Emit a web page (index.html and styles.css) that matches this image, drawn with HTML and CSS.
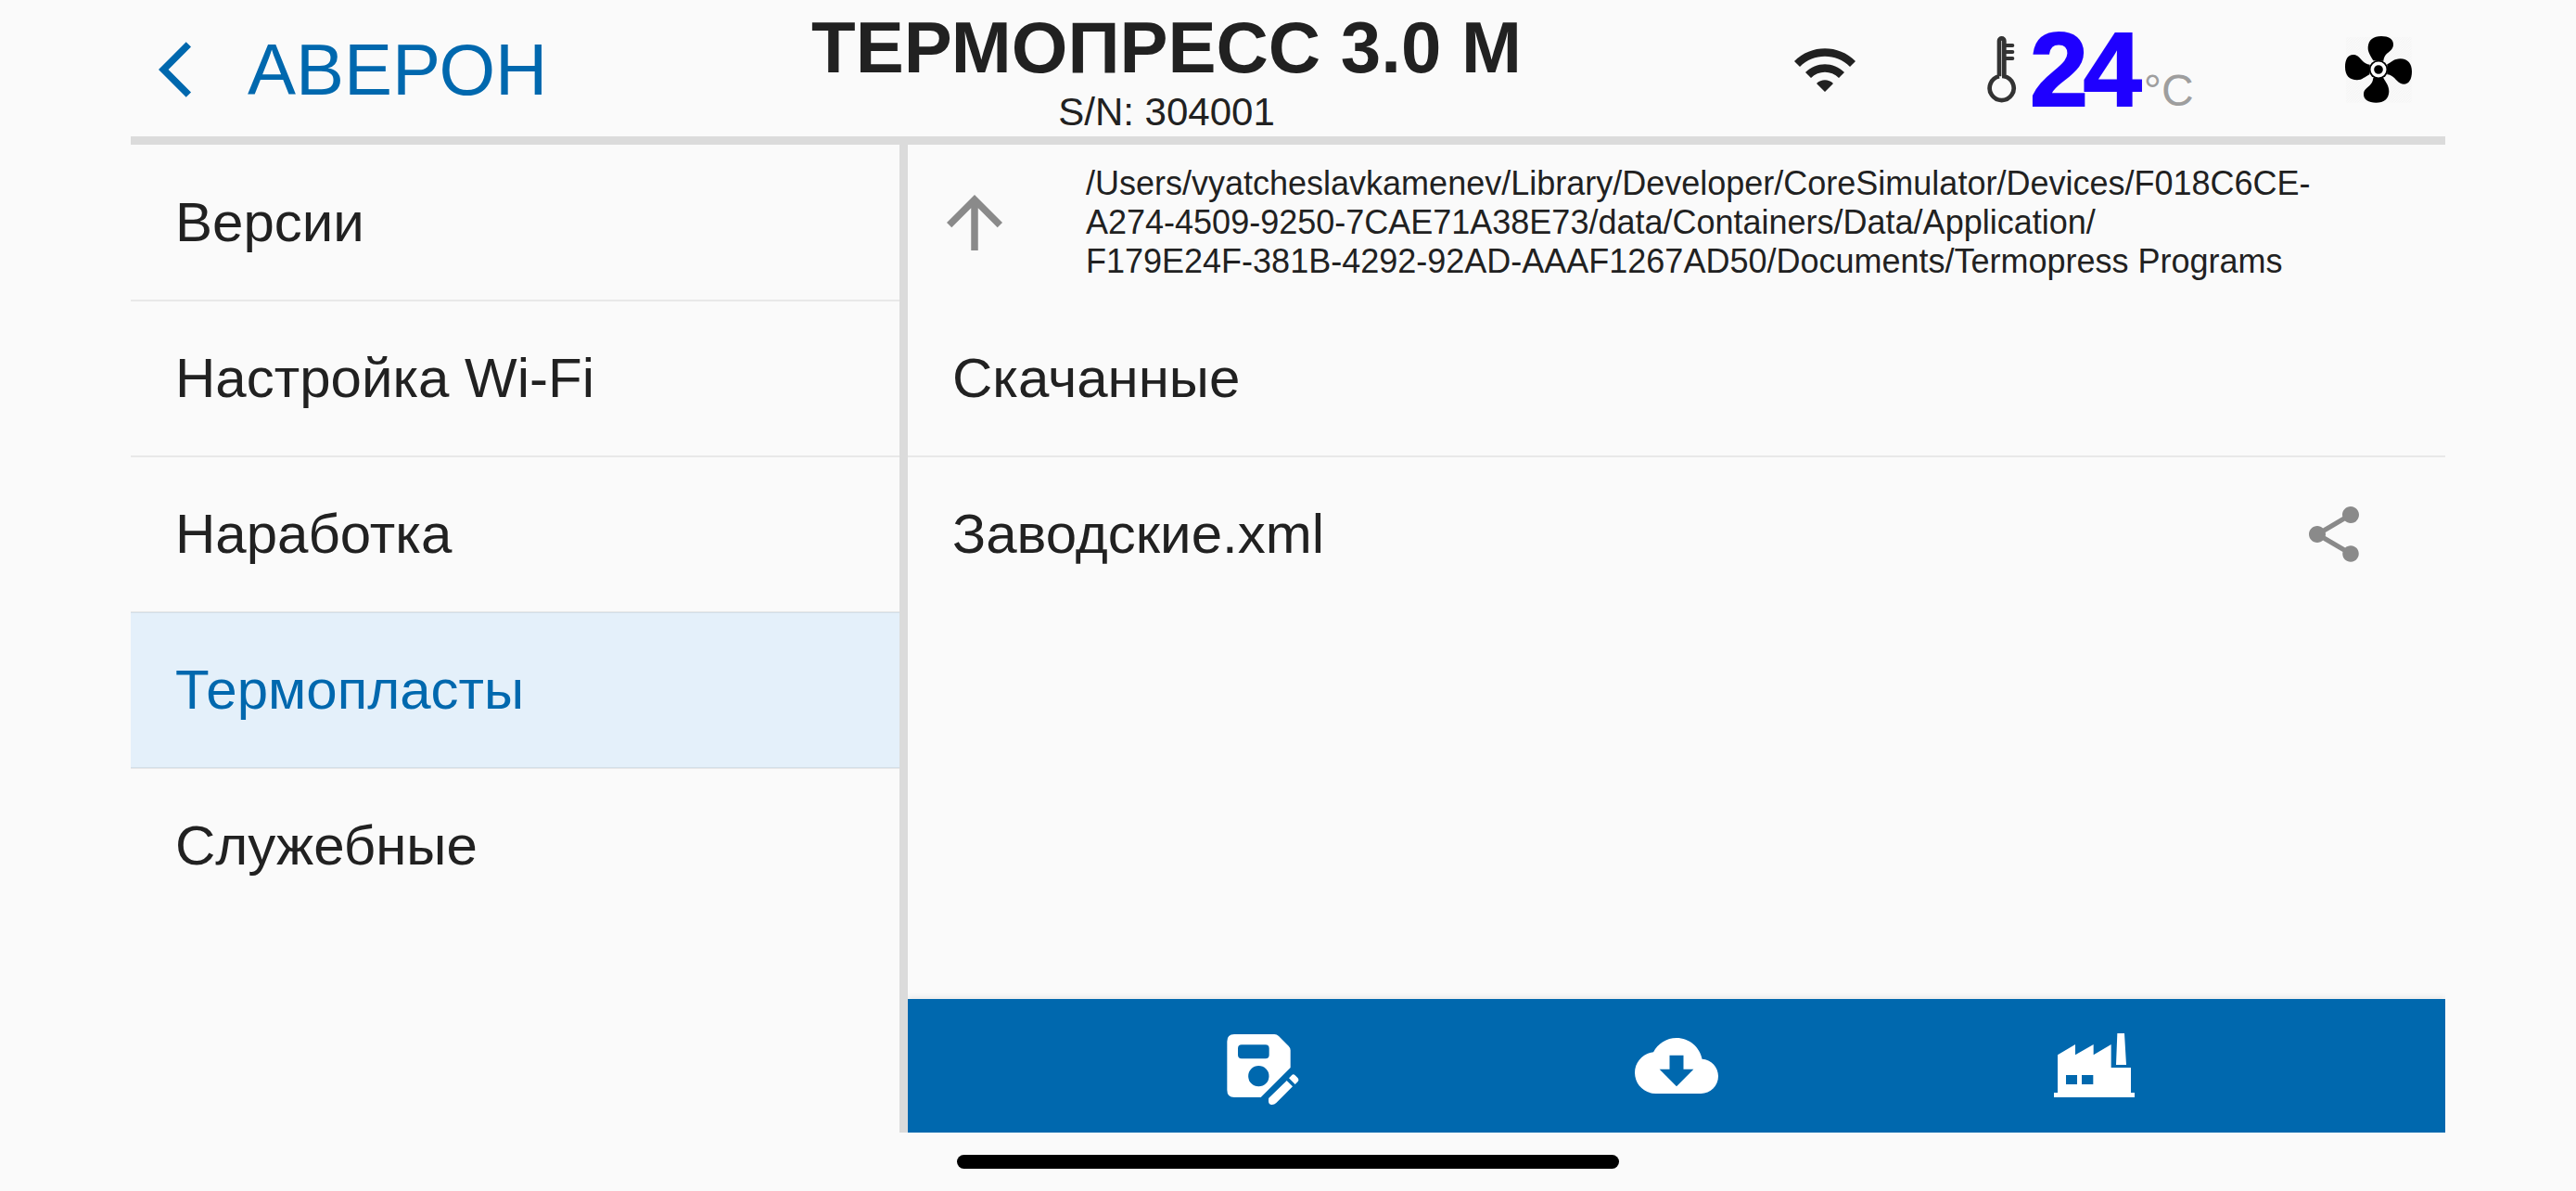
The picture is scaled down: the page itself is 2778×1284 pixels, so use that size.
FILE: index.html
```html
<!DOCTYPE html>
<html lang="ru">
<head>
<meta charset="utf-8">
<title>Термопресс 3.0 М</title>
<link rel="stylesheet" href="styles.css">
</head>
<body>
<div class="app">
  <header class="header">
    <div class="back">
      <svg class="icon-md" viewBox="0 0 24 24"><path d="M11.67 3.87L9.9 2.1 0 12l9.9 9.9 1.77-1.77L3.54 12z"/></svg>
      <span class="brand">АВЕРОН</span>
    </div>
    <div class="heading">
      <h1 class="title">ТЕРМОПРЕСС 3.0 М</h1>
      <div class="serial">S/N: 304001</div>
    </div>
    <div class="status">
      <svg class="icon-md wifi" viewBox="0 0 24 24"><path d="M1 9l2 2c4.97-4.97 13.03-4.97 18 0l2-2C16.93 2.93 7.08 2.93 1 9zm8 8l3 3 3-3c-1.65-1.66-4.34-1.66-6 0zm-4-4l2 2c2.76-2.76 7.24-2.76 10 0l2-2C15.14 9.14 8.87 9.14 5 13z"/></svg>
      <svg class="thermometer" viewBox="0 0 99 222">
        <path d="M42 133V18a8 8 0 0 1 16 0V133A39 39 0 1 1 42 133" fill="none" stroke="#333" stroke-width="14"/>
        <path d="M62 33H85M62 54H85M62 75H85" fill="none" stroke="#333" stroke-width="12" stroke-linecap="round"/>
      </svg>
      <div class="temperature"><span class="degrees">24</span><span class="unit">°C</span></div>
      <svg class="icon-md fan" viewBox="57 57 216 216">
        <defs><pattern id="hatch" width="8" height="8" patternUnits="userSpaceOnUse"><path d="M-2 2L2-2M0 8L8 0M6 10L10 6" stroke="#ededed" stroke-width="1.5"/></pattern></defs>
        <rect x="60" y="60" width="212" height="212" fill="url(#hatch)"/>
        <path d="M148 136C140 120 130 110 131 92C133 69 148 57 174 57C198 57 213 66 213 83C213 98 203 104 194 112C186 119 182 127 181 137Z"/>
        <path d="M193 148C207 142 214 130 236 130C260 130 273 146 273 171C273 197 263 212 247 212C232 212 226 202 217 193C210 186 202 181 193 181Z"/>
        <path d="M181 192C188 206 199 216 199 236C198 260 183 272 157 272C132 272 117 261 117 245C117 231 127 225 136 217C143 210 147 203 148 192Z"/>
        <path d="M136 181C121 188 113 199 96 199C71 199 57 184 57 157C57 132 66 117 83 117C98 117 104 127 112 136C119 144 127 148 137 149Z"/>
        <circle cx="165" cy="165" r="31"/>
        <circle cx="165" cy="165" r="20" fill="none" stroke="#fff" stroke-width="11"/>
      </svg>
    </div>
  </header>
  <div class="content">
    <nav class="sidebar">
      <div class="row">Версии</div>
      <div class="row">Настройка Wi-Fi</div>
      <div class="row">Наработка</div>
      <div class="row selected">Термопласты</div>
      <div class="row last">Служебные</div>
    </nav>
    <main class="files">
      <div class="path-row">
        <svg class="icon-lg up" viewBox="0 0 24 24"><path d="M4 12l1.41 1.41L11 7.83V20h2V7.83l5.58 5.59L20 12l-8-8-8 8z"/></svg>
        <div class="path">/Users/vyatcheslavkamenev/Library/Developer/CoreSimulator/Devices/F018C6CE-<br>A274-4509-9250-7CAE71A38E73/data/Containers/Data/Application/<br>F179E24F-381B-4292-92AD-AAAF1267AD50/Documents/Termopress Programs</div>
      </div>
      <div class="row">Скачанные</div>
      <div class="row last">Заводские.xml
        <svg class="icon-md share" viewBox="0 0 24 24"><path d="M18 16.08c-.76 0-1.44.3-1.96.77L8.91 12.7c.05-.23.09-.46.09-.7s-.04-.47-.09-.7l7.05-4.11c.54.5 1.25.81 2.04.81 1.66 0 3-1.34 3-3s-1.34-3-3-3-3 1.34-3 3c0 .24.04.47.09.7L8.04 9.81C7.5 9.31 6.79 9 6 9c-1.66 0-3 1.34-3 3s1.34 3 3 3c.79 0 1.5-.31 2.04-.81l7.12 4.16c-.05.21-.08.43-.08.65 0 1.61 1.31 2.92 2.92 2.92s2.92-1.31 2.92-2.92-1.31-2.92-2.92-2.92z"/></svg>
      </div>
      <div class="toolbar">
        <svg class="icon-lg" viewBox="99 132 270 270">
          <path fill-rule="evenodd" d="M153 165H283Q291 165 297 171L329 203Q335 209 335 217V273L239 369H153Q130 369 130 346V188Q130 165 153 165ZM177 199Q165 199 165 211V232Q165 244 177 244H254Q266 244 266 232V211Q266 199 254 199ZM232 267A33.500 33.500 0 1 0 232 334A33.500 33.500 0 1 0 232 267Z"/>
          <path d="M323 315L342 334L289 387Q283 393 275 393Q264 393 264 382V374Q264 371 268 368ZM330 307L339 298Q344 292 350 298L359 307Q364 313 359 318L350 327Z"/>
        </svg>
        <svg class="icon-lg" viewBox="0 0 24 24"><path d="M19.350 10.040C18.670 6.590 15.640 4 12 4 9.110 4 6.600 5.640 5.350 8.040 2.340 8.360 0 10.910 0 14c0 3.310 2.690 6 6 6h13c2.760 0 5-2.240 5-5 0-2.640-2.050-4.780-4.650-4.960zM16.900 13L12 17.900 7.100 13H10V9h4v4z"/></svg>
        <svg class="icon-lg" viewBox="99 132 270 270">
          <path fill-rule="evenodd" d="M117 232L174 198V232L233 198V232L290 198V273H354V354H366V369H105V354H117ZM144 297V327H180V297ZM195 297V327H232V297ZM310 162H333L339 264H306Z"/>
        </svg>
      </div>
    </main>
  </div>
  <div class="home-indicator"></div>
</div>
</body>
</html>
```
FILE: styles.css
```css
* { box-sizing: border-box; }

body {
  margin: 0;
  background: #fafafa;
  color: #212121;
  font-family: "Liberation Sans", Arial, sans-serif;
}

svg { display: block; flex: none; fill: currentColor; }

.app {
  height: 1284px;
  padding: 0 141px;
  display: flex;
  flex-direction: column;
  overflow: hidden;
}

.icon-md { width: 72px; height: 72px; }
.icon-lg { width: 90px; height: 90px; }

.header {
  height: 156px;
  border-bottom: 9px solid #dbdbdb;
  display: grid;
  grid-template-columns: 700px 834px 962px;
  grid-template-rows: 147px;
}

.back {
  display: flex;
  align-items: center;
  gap: 24px;
  padding: 3px 0 0 30px;
  color: #0068ae;
}

.brand { font-size: 78px; line-height: 90px; }

.heading { padding-top: 6px; text-align: center; }
.title { margin: 0; font-size: 78px; line-height: 90px; white-space: nowrap; }
.serial { font-size: 42px; line-height: 50px; }

.status {
  display: flex;
  align-items: center;
  padding: 3px 36px 0 257px;
}

.thermometer { width: 33px; height: 74px; margin-left: 138px; }

.temperature {
  display: flex;
  align-items: baseline;
  margin-left: 14px;
}

.degrees {
  color: #1f00ff;
  font-size: 113px;
  font-weight: 700;
  line-height: 120px;
  letter-spacing: -5px;
  -webkit-text-stroke: 2px #1f00ff;
}

.unit {
  margin-left: 7px;
  color: #9e9e9e;
  font-size: 48px;
  line-height: 56px;
}
.fan { margin-left: auto; color: #000; }

.content { height: 1065px; display: flex; }

.sidebar { width: 838px; border-right: 9px solid #dbdbdb; }

.row {
  position: relative;
  height: 168px;
  padding: 0 84px 1px 48px;
  display: flex;
  align-items: center;
  justify-content: space-between;
  font-size: 60px;
}

.row::after {
  content: "";
  position: absolute;
  left: 0;
  right: 0;
  bottom: -1px;
  height: 2px;
  background: rgba(0, 0, 0, 0.07);
  z-index: 1;
}

.row.last::after { display: none; }
.row.selected { background: #e4f0fa; color: #0068ae; }

.files { flex: 1; display: flex; flex-direction: column; }

.path-row {
  height: 168px;
  display: flex;
  align-items: center;
  gap: 75px;
  padding-left: 27px;
}

.up, .share { color: #8a8a8a; }
.path { font-size: 36px; line-height: 42px; white-space: nowrap; }

.toolbar {
  height: 144px;
  margin-top: auto;
  display: flex;
  align-items: center;
  justify-content: center;
  gap: 360px;
  background: #0068ae;
  color: #fff;
  box-shadow: 0 -2px 6px rgba(0, 0, 0, 0.08);
  clip-path: inset(-12px 0 0 0);
}

.home-indicator {
  width: 714px;
  height: 15px;
  margin: 24px auto 0;
  border-radius: 8px;
  background: #000;
}
```
